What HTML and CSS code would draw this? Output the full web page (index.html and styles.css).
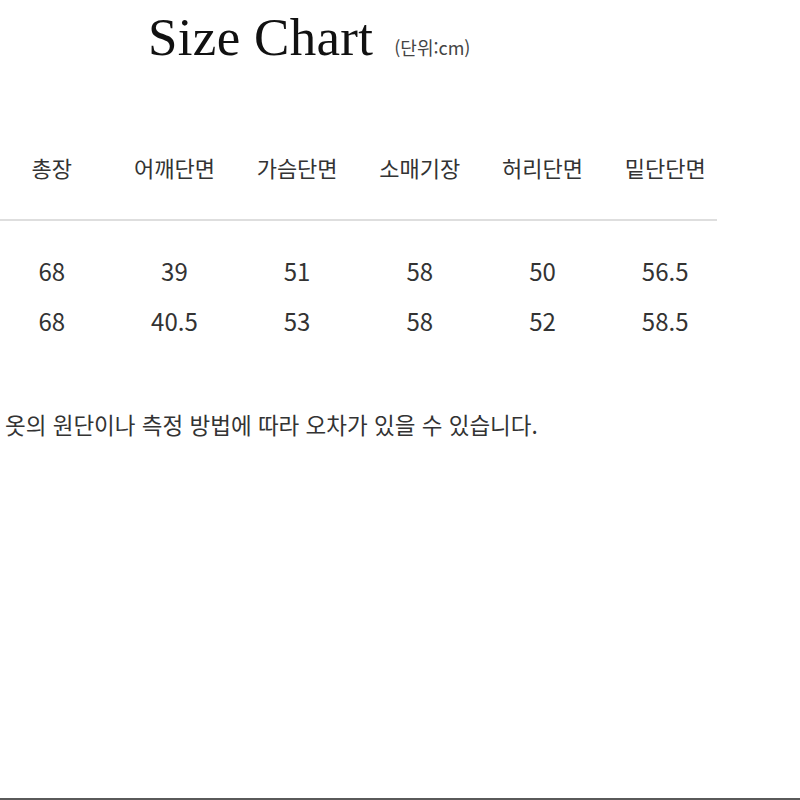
FILE: index.html
```html
<!DOCTYPE html>
<html lang="ko">
<head>
<meta charset="utf-8">
<link rel="stylesheet" href="styles.css">
</head>
<body>
<div class="page">
  <div class="title-row">
    <h1 class="title">Size Chart</h1>
    <span class="unit">(단위:cm)</span>
  </div>
  <div class="chart">
    <div class="grid head">
      <div>총장</div><div>어깨단면</div><div>가슴단면</div><div>소매기장</div><div>허리단면</div><div>밑단단면</div>
    </div>
    <div class="rule"></div>
    <div class="grid row first">
      <div>68</div><div>39</div><div>51</div><div>58</div><div>50</div><div>56.5</div>
    </div>
    <div class="grid row">
      <div>68</div><div>40.5</div><div>53</div><div>58</div><div>52</div><div>58.5</div>
    </div>
  </div>
  <p class="note">옷의 원단이나 측정 방법에 따라 오차가 있을 수 있습니다.</p>
</div>
</body>
</html>
```

FILE: styles.css
```css
html, body {
  margin: 0;
  padding: 0;
  background: #fff;
}
.page {
  height: 800px;
  box-sizing: border-box;
  border-bottom: 2px solid #5a5a5a;
  display: flex;
  flex-direction: column;
  overflow: hidden;
  font-family: "Noto Sans CJK KR", "Noto Sans", sans-serif;
  color: #333;
}
.title-row {
  display: flex;
  align-items: baseline;
  gap: 21px;
  padding: 12px 0 0 148px;
}
.title {
  margin: 0;
  font-family: "Liberation Serif", serif;
  font-weight: 400;
  font-size: 53px;
  line-height: 50px;
  letter-spacing: 0.3px;
  color: #111;
}
.unit {
  font-size: 18px;
  color: #444;
}
.chart {
  margin-top: 90px;
  width: 717px;
}
.grid {
  display: grid;
  grid-template-columns: repeat(6, 122.7px);
  margin-left: -9.6px;
  text-align: center;
}
.head {
  font-size: 22px;
  line-height: 30px;
}
.rule {
  height: 2px;
  background: #dedede;
  margin-top: 37px;
}
.row {
  font-size: 24px;
  line-height: 30px;
  height: 50px;
}
.row.first {
  margin-top: 35px;
}
.note {
  margin: 53px 0 0 5px;
  font-size: 22.5px;
  line-height: 30px;
}
```
